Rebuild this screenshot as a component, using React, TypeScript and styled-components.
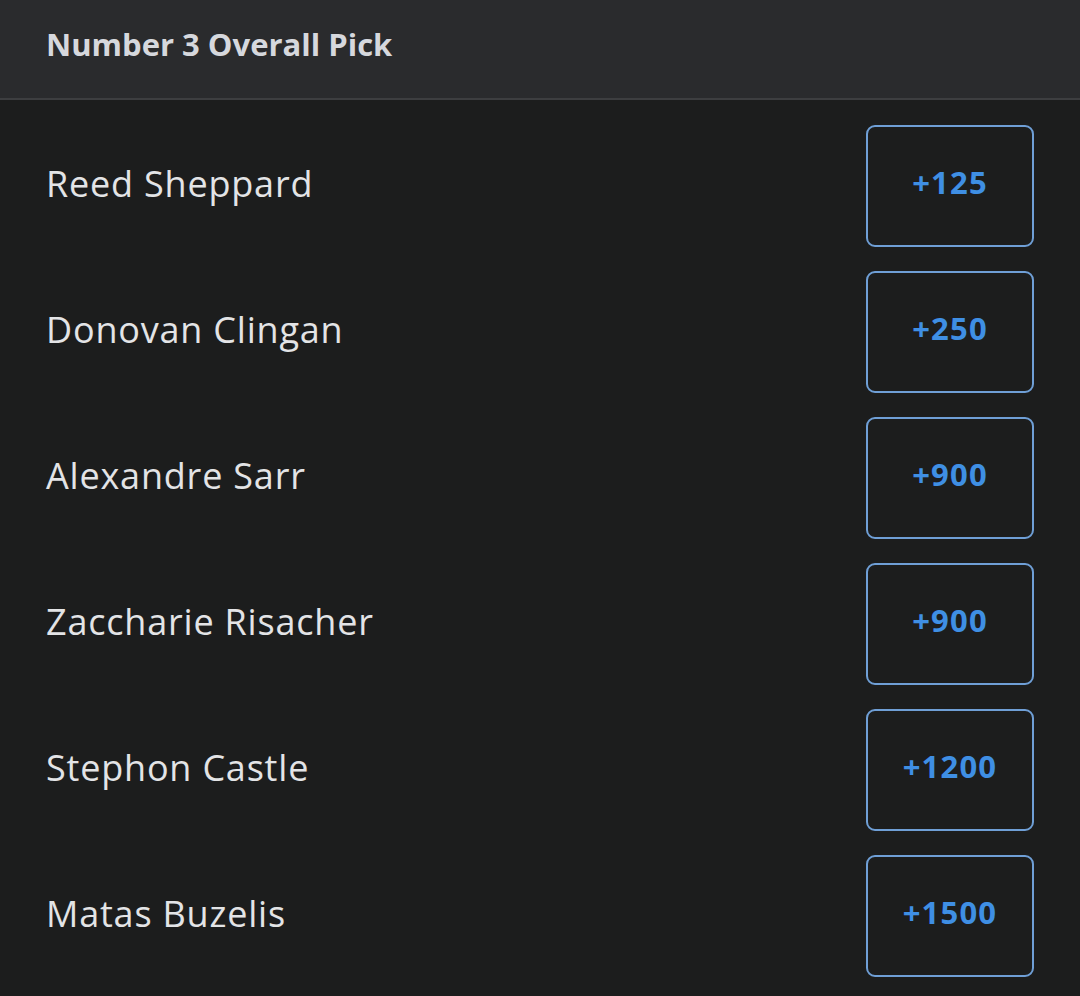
import React from "react";
import styled, { createGlobalStyle } from "styled-components";

const GlobalStyle = createGlobalStyle`
  html, body {
    margin: 0;
    padding: 0;
    background: #1c1d1d;
  }
  body {
    font-family: "Open Sans", Lato, "Liberation Sans", sans-serif;
  }
`;

const Page = styled.div`
  width: 1080px;
  min-height: 996px;
  background: #1c1d1d;
`;

const Header = styled.div`
  height: 98px;
  background: #2a2b2d;
  border-bottom: 2px solid #3d3e40;
  display: flex;
  align-items: center;
  padding: 0 46px;
  box-sizing: content-box;
`;

const Title = styled.h1`
  margin: 0;
  margin-top: -10px;
  font-size: 31px;
  font-weight: 700;
  color: #d6d8dd;
`;

const List = styled.div`
  display: flex;
  flex-direction: column;
  gap: 24px;
  padding: 25px 46px 0 46px;
`;

const Row = styled.div`
  display: flex;
  align-items: center;
  justify-content: space-between;
  height: 122px;
`;

const Name = styled.span`
  font-size: 36px;
  font-weight: 400;
  letter-spacing: 0.8px;
  color: #e3e4e6;
  margin-top: -6px;
`;

const OddsButton = styled.button`
  width: 168px;
  height: 122px;
  box-sizing: border-box;
  border: 2px solid #6f9fd6;
  border-radius: 9px;
  background: #1c1d1d;
  color: #3f8fe4;
  font-family: inherit;
  font-size: 31px;
  font-weight: 700;
  letter-spacing: 1.2px;
  display: flex;
  align-items: center;
  justify-content: center;
  padding: 0 0 8px 0;
  cursor: pointer;
`;

const picks = [
  { name: "Reed Sheppard", odds: "+125" },
  { name: "Donovan Clingan", odds: "+250" },
  { name: "Alexandre Sarr", odds: "+900" },
  { name: "Zaccharie Risacher", odds: "+900" },
  { name: "Stephon Castle", odds: "+1200" },
  { name: "Matas Buzelis", odds: "+1500" },
];

export default function App() {
  return (
    <Page>
      <GlobalStyle />
      <Header>
        <Title>Number 3 Overall Pick</Title>
      </Header>
      <List>
        {picks.map((p) => (
          <Row key={p.name}>
            <Name>{p.name}</Name>
            <OddsButton>{p.odds}</OddsButton>
          </Row>
        ))}
      </List>
    </Page>
  );
}
